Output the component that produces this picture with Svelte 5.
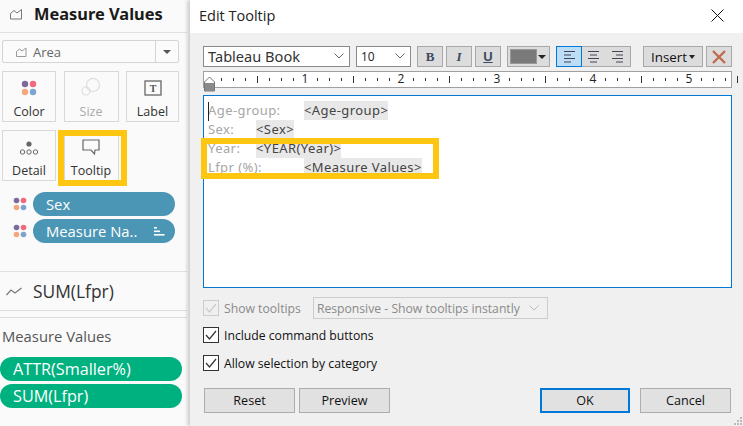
<script>
  const rulerMarks = Array.from({ length: 44 }, (_, i) => i + 1);
  const rows = [
    { label: 'Age-group:', field: '<Age-group>', tab: 96 },
    { label: 'Sex:', field: '<Sex>', tab: 48 },
    { label: 'Year:', field: '<YEAR(Year)>', tab: 48 },
    { label: 'Lfpr (%):', field: '<Measure Values>', tab: 96 }
  ];
</script>

<div class="app">
  <aside class="side">
    <div class="side-title">
      <svg width="14" height="12" viewBox="0 0 14 12" fill="none" stroke="#777"><path d="M1.5 11V5.5L5 2.5L8 5L12.5 1.5V11Z" /></svg>
      <span>Measure Values</span>
    </div>

    <div class="mark-select">
      <div class="mark-name">
        <svg width="11" height="10" viewBox="0 0 11 10" fill="none" stroke="#999"><path d="M.5 9.5V4.5L3.5 2L6 4L10 1V9.5Z" /></svg>
        <span>Area</span>
      </div>
      <div class="mark-arrow"><i></i></div>
    </div>

    <div class="cards">
      <div class="card">
        <svg width="16" height="16" viewBox="0 0 16 16"><circle cx="4" cy="4" r="3.2" fill="#7b6a9b" /><circle cx="12" cy="4" r="3.2" fill="#ee6a7c" /><circle cx="4" cy="12" r="3.2" fill="#f3a77c" /><circle cx="12" cy="12" r="3.2" fill="#7fa3cf" /></svg>
        <span>Color</span>
      </div>
      <div class="card off">
        <svg width="20" height="18" viewBox="0 0 20 18" fill="none" stroke="#ddd" stroke-width="1.2"><circle cx="12" cy="7" r="6.5" /><circle cx="5" cy="13" r="4" /></svg>
        <span>Size</span>
      </div>
      <div class="card">
        <svg width="18" height="16" viewBox="0 0 18 16"><rect x="1" y="1" width="16" height="14" fill="none" stroke="#666" stroke-width="1.3" /><text x="9" y="12" text-anchor="middle" font-size="10" font-weight="700" font-family="Liberation Serif, serif" fill="#555">T</text></svg>
        <span>Label</span>
      </div>
      <div class="card">
        <svg width="20" height="14" viewBox="0 0 20 14" fill="none" stroke="#666"><circle cx="10" cy="3" r="2.6" fill="#666" stroke="none" /><circle cx="3.5" cy="11" r="2.2" /><circle cx="10" cy="11" r="2.2" /><circle cx="16.5" cy="11" r="2.2" /></svg>
        <span>Detail</span>
      </div>
      <div class="card tip">
        <svg width="18" height="16" viewBox="0 0 18 16" fill="none" stroke="#666" stroke-width="1.2"><path d="M1 1H17V11H13L12.5 15L9 11H1Z" /></svg>
        <span>Tooltip</span>
      </div>
    </div>

    <div class="pills">
      <div class="pill-row">
        <svg class="dots" width="14" height="14" viewBox="0 0 14 14"><circle cx="3.5" cy="3.5" r="2.8" fill="#7b6a9b" /><circle cx="10.5" cy="3.5" r="2.8" fill="#ee6a7c" /><circle cx="3.5" cy="10.5" r="2.8" fill="#f3a77c" /><circle cx="10.5" cy="10.5" r="2.8" fill="#7fa3cf" /></svg>
        <div class="pill blue">Sex</div>
      </div>
      <div class="pill-row">
        <svg class="dots" width="14" height="14" viewBox="0 0 14 14"><circle cx="3.5" cy="3.5" r="2.8" fill="#7b6a9b" /><circle cx="10.5" cy="3.5" r="2.8" fill="#ee6a7c" /><circle cx="3.5" cy="10.5" r="2.8" fill="#f3a77c" /><circle cx="10.5" cy="10.5" r="2.8" fill="#7fa3cf" /></svg>
        <div class="pill blue">
          <span>Measure Na..</span>
          <svg width="11" height="9" viewBox="0 0 11 9" fill="#fff"><rect width="3" height="1.6" /><rect y="3.5" width="6" height="1.6" /><rect y="7" width="10.5" height="1.6" /></svg>
        </div>
      </div>
    </div>

    <div class="sum-row">
      <svg width="16" height="9" viewBox="0 0 16 9" fill="none" stroke="#777" stroke-width="1.2"><path d="M.5 8L5 3L9 6L15.5 1" /></svg>
      <span>SUM(Lfpr)</span>
    </div>

    <div class="values">
      <div class="values-title">Measure Values</div>
      <div class="pill green">ATTR(Smaller%)</div>
      <div class="pill green">SUM(Lfpr)</div>
    </div>
  </aside>

  <section class="dialog">
    <header class="titlebar">
      <span>Edit Tooltip</span>
      <svg width="13" height="13" viewBox="0 0 13 13" stroke="#111" stroke-width="1"><path d="M.5.5L12.5 12.5M12.5.5L.5 12.5" /></svg>
    </header>

    <div class="body">
      <div class="toolbar">
        <div class="select font">
          <span>Tableau Book</span>
          <svg width="10" height="6" viewBox="0 0 10 6" fill="none" stroke="#666"><path d="M.5.5L5 5L9.5.5" /></svg>
        </div>
        <div class="select size">
          <span>10</span>
          <svg width="10" height="6" viewBox="0 0 10 6" fill="none" stroke="#666"><path d="M.5.5L5 5L9.5.5" /></svg>
        </div>
        <div class="tb-group">
          <button class="tb b">B</button>
          <button class="tb i">I</button>
          <button class="tb u">U</button>
        </div>
        <div class="swatch"><i></i><b></b></div>
        <div class="align">
          <div class="al on"><svg width="11" height="12" viewBox="0 0 11 12" stroke="#445"><path d="M0 .5H11M0 4H7M0 7.5H11M0 11H7" /></svg></div>
          <div class="al"><svg width="11" height="12" viewBox="0 0 11 12" stroke="#445"><path d="M0 .5H11M2 4H9M0 7.5H11M2 11H9" /></svg></div>
          <div class="al"><svg width="11" height="12" viewBox="0 0 11 12" stroke="#445"><path d="M0 .5H11M4 4H11M0 7.5H11M4 11H11" /></svg></div>
        </div>
        <div class="insert">Insert<i></i></div>
        <div class="clear">
          <svg width="14" height="14" viewBox="0 0 14 14" stroke="#bf6b50" stroke-width="2.4"><path d="M1 1L13 13M13 1L1 13" /></svg>
        </div>
      </div>

      <div class="ruler">
        <svg width="527" height="15" viewBox="0 0 527 15">
          {#each rulerMarks as m}
            {#if m % 8 === 4}
              <rect x={m * 12 + 5} y="3" width="1" height="7" fill="#333" />
            {:else if m % 8 !== 0}
              <rect x={m * 12 + 5} y="5" width="1" height="3" fill="#333" />
            {/if}
          {/each}
          <path d="M.5 18V9L5.5 4L10.5 9V18Z" fill="#fff" stroke="#777" />
          <path d="M1 18V10H10V18Z" fill="#8a8a8a" />
        </svg>
        {#each [1, 2, 3, 4, 5] as n}
          <span class="num" style="left: {n * 96 + 5}px">{n}</span>
        {/each}
      </div>

      <div class="editor">
        <span class="caret"></span>
        {#each rows as r}
          <div class="line">
            <span class="lbl" style="width: {r.tab}px">{r.label}</span><span class="fld">{r.field}</span>
          </div>
        {/each}
      </div>

      <div class="opts">
        <div class="opt first">
          <span class="check dis"><svg width="14" height="14" viewBox="0 0 14 14" fill="none" stroke="#ccc" stroke-width="1.2"><path d="M2 7L5.5 11L12 3" /></svg></span>
          <span class="muted">Show tooltips</span>
          <div class="resp">
            <span>Responsive - Show tooltips instantly</span>
            <svg width="10" height="6" viewBox="0 0 10 6" fill="none" stroke="#bbb"><path d="M.5.5L5 5L9.5.5" /></svg>
          </div>
        </div>
        <div class="opt">
          <span class="check"><svg width="14" height="14" viewBox="0 0 14 14" fill="none" stroke="#333" stroke-width="1.2"><path d="M2 7L5.5 11L12 3" /></svg></span>
          <span>Include command buttons</span>
        </div>
        <div class="opt">
          <span class="check"><svg width="14" height="14" viewBox="0 0 14 14" fill="none" stroke="#333" stroke-width="1.2"><path d="M2 7L5.5 11L12 3" /></svg></span>
          <span>Allow selection by category</span>
        </div>
      </div>

      <div class="actions">
        <button class="btn">Reset</button>
        <button class="btn">Preview</button>
        <button class="btn ok">OK</button>
        <button class="btn">Cancel</button>
      </div>
    </div>

    <svg class="grip" width="10" height="10" viewBox="0 0 10 10" fill="#bbb">
      <rect x="7" y="1" width="2" height="2" /><rect x="4" y="4" width="2" height="2" /><rect x="7" y="4" width="2" height="2" /><rect x="1" y="7" width="2" height="2" /><rect x="4" y="7" width="2" height="2" /><rect x="7" y="7" width="2" height="2" />
    </svg>
  </section>

  <!-- yellow callouts drawn over the text rows -->
  <div class="callout rows-box"></div>
  <div class="callout tip-box"></div>
</div>

<style>
  :global(body) {
    margin: 0;
    background: #fff;
  }

  .app {
    position: relative;
    width: 743px;
    height: 426px;
    display: flex;
    overflow: hidden;
    font-family: "Open Sans", "Noto Sans", sans-serif;
    font-size: 12px;
    color: #222;
  }

  /* left shelf panel */
  .side {
    width: 187px;
    height: 426px;
    flex: none;
    background: #fafafa;
    box-sizing: border-box;
  }

  .side-title {
    height: 33px;
    box-sizing: border-box;
    display: flex;
    align-items: center;
    gap: 11px;
    padding: 0 0 5px 9px;
    border-bottom: 1px solid #e0e0e0;
    font-size: 16.4px;
    font-weight: 700;
    color: #1a1a1a;
    font-family: "Noto Sans", sans-serif;
  }

  .mark-select {
    margin: 7px 8px 0 2px;
    height: 23px;
    display: flex;
    border: 1px solid #d4d4d4;
    border-radius: 2px;
    box-sizing: border-box;
    background: #fbfbfb;
  }

  .mark-name {
    flex: 1;
    display: flex;
    align-items: center;
    gap: 6px;
    padding-left: 13px;
    font-size: 13px;
    color: #666;
  }

  .mark-arrow {
    width: 22px;
    border-left: 1px solid #d4d4d4;
    display: flex;
    align-items: center;
    justify-content: center;
  }

  .mark-arrow i {
    border: 4px solid transparent;
    border-top: 4px solid #555;
    border-bottom: 0;
  }

  .cards {
    margin: 8px 8px 0 2px;
    display: grid;
    grid-template-columns: 54px 55px 53px;
    grid-auto-rows: 51px;
    column-gap: 7.5px;
    row-gap: 8px;
  }

  .card {
    border: 1px solid #d8d8d8;
    box-sizing: border-box;
    display: flex;
    flex-direction: column;
    align-items: center;
    justify-content: flex-end;
    gap: 7px;
    padding-bottom: 1px;
    font-size: 12.5px;
    color: #333;
  }

  .card.off {
    color: #aaa;
  }

  .pills {
    margin-top: 11px;
    display: flex;
    flex-direction: column;
    gap: 3px;
  }

  .pill-row {
    display: flex;
    align-items: center;
    margin-left: 13px;
    gap: 6px;
  }

  .pill {
    height: 24px;
    border-radius: 12px;
    color: #fff;
    display: flex;
    align-items: center;
    font-size: 14.8px;
    box-sizing: border-box;
  }

  .pill.blue {
    width: 142px;
    background: #4b96b4;
    padding: 0 10px 0 13px;
    justify-content: space-between;
  }

  .sum-row {
    margin-top: 28px;
    height: 40px;
    box-sizing: border-box;
    display: flex;
    align-items: center;
    gap: 11px;
    padding-left: 6px;
    border-top: 1px solid #e0e0e0;
    border-bottom: 1px solid #dcdcdc;
    font-size: 17.4px;
    color: #333;
  }

  .values {
    margin-top: 6px;
    border-top: 1px solid #dcdcdc;
    padding-top: 10px;
  }

  .values-title {
    padding-left: 2px;
    font-size: 14.8px;
    color: #555;
    margin-bottom: 12px;
    line-height: 17px;
  }

  .pill.green {
    width: 182px;
    background: #00b180;
    padding-left: 13px;
    margin-bottom: 3px;
    font-size: 16.2px;
  }

  /* dialog */
  .dialog {
    position: relative;
    flex: 1;
    margin-left: 3px;
    background: #f0f0f0;
    box-shadow: -3px 0 3px rgba(0, 0, 0, 0.18);
  }

  .titlebar {
    height: 33px;
    box-sizing: border-box;
    background: #fff;
    display: flex;
    align-items: center;
    justify-content: space-between;
    padding: 0 19px 3px 9px;
    font-size: 14.5px;
    color: #222;
  }

  .body {
    padding: 13px 10px 0 13px;
  }

  .toolbar {
    display: flex;
    height: 21px;
  }

  .select {
    background: #fff;
    border: 1px solid #8a8a8a;
    box-sizing: border-box;
    display: flex;
    align-items: center;
    justify-content: space-between;
    padding: 0 5px 1px 4px;
    height: 21px;
  }

  .select.font {
    width: 147px;
    font-family: "Noto Sans", sans-serif;
    font-size: 14.6px;
    color: #333;
    margin-right: 6px;
  }

  .select.size {
    width: 55px;
    margin-right: 6px;
  }

  .tb-group {
    display: flex;
    gap: 3px;
    margin-right: 6px;
  }

  .tb {
    width: 26px;
    height: 21px;
    padding: 0;
    background: #dcdcdc;
    border: 1px solid #a8a8a8;
    font-family: "Liberation Serif", serif;
    font-size: 13px;
    font-weight: 700;
    color: #3c4a60;
  }

  .tb.i {
    font-style: italic;
  }

  .tb.u {
    text-decoration: underline;
    font-family: "Liberation Sans", sans-serif;
  }

  .swatch {
    width: 43px;
    height: 21px;
    box-sizing: border-box;
    background: #dcdcdc;
    border: 1px solid #a8a8a8;
    display: flex;
    align-items: center;
    padding: 0 3px 0 2px;
    justify-content: space-between;
    margin-right: 6px;
  }

  .swatch i {
    width: 27px;
    height: 15px;
    background: #7a7a7a;
    border: 1px solid #999;
    box-sizing: border-box;
  }

  .swatch b {
    border: 4px solid transparent;
    border-top: 4px solid #222;
    border-bottom: 0;
  }

  .align {
    width: 75px;
    height: 21px;
    box-sizing: border-box;
    display: flex;
    background: #dcdcdc;
    border: 1px solid #a8a8a8;
    margin-right: 12px;
  }

  .al {
    flex: 1;
    display: flex;
    align-items: center;
    justify-content: center;
    box-sizing: border-box;
  }

  .al.on {
    background: #bddcf5;
    outline: 1px solid #0078d7;
  }

  .insert {
    width: 60px;
    height: 21px;
    box-sizing: border-box;
    background: #dcdcdc;
    border: 1px solid #a8a8a8;
    display: flex;
    align-items: center;
    justify-content: center;
    gap: 2px;
    margin-right: 3px;
    font-size: 13.4px;
    color: #111;
  }

  .insert i {
    border: 3.5px solid transparent;
    border-top: 4px solid #222;
    border-bottom: 0;
  }

  .clear {
    width: 26px;
    height: 21px;
    box-sizing: border-box;
    background: #dcdcdc;
    border: 1px solid #a8a8a8;
    display: flex;
    align-items: center;
    justify-content: center;
  }

  .ruler {
    position: relative;
    margin-top: 4px;
    width: 529px;
    height: 17px;
    box-sizing: border-box;
    background: #fff;
    border: 1px solid #a0a0a0;
  }

  .ruler svg {
    display: block;
    margin-top: 1px;
    overflow: visible;
  }

  .num {
    position: absolute;
    top: -1px;
    font-size: 12px;
    line-height: 16px;
    color: #222;
    transform: translateX(-50%);
  }

  .editor {
    position: relative;
    margin-top: 7px;
    width: 529px;
    height: 193px;
    box-sizing: border-box;
    background: #fff;
    border: 1px solid #0078d7;
    padding: 5px 0 0 4px;
    font-family: "Noto Sans", sans-serif;
    font-size: 13px;
    letter-spacing: 0.42px;
  }

  .caret {
    position: absolute;
    left: 4px;
    top: 6px;
    width: 1px;
    height: 19px;
    background: #222;
  }

  .line {
    height: 19px;
    line-height: 19px;
    white-space: nowrap;
    display: flex;
  }

  .lbl {
    flex: none;
    color: #a6a6a6;
  }

  .fld {
    background: #e8e8e8;
    color: #444;
  }

  .opts {
    margin-top: 12px;
  }

  .opt {
    display: flex;
    align-items: center;
    height: 16px;
    gap: 5px;
    margin-bottom: 12px;
    font-size: 12.2px;
    color: #111;
  }

  .opt.first {
    margin-bottom: 11px;
  }

  .check {
    width: 16px;
    height: 16px;
    box-sizing: border-box;
    border: 1px solid #333;
    background: #fff;
    display: flex;
    align-items: center;
    justify-content: center;
  }

  .check.dis {
    border-color: #ccc;
    background: #f0f0f0;
  }

  .muted {
    color: #8a8a8a;
    margin-right: 7px;
  }

  .resp {
    width: 235px;
    height: 22px;
    box-sizing: border-box;
    border: 1px solid #ccc;
    display: flex;
    align-items: center;
    justify-content: space-between;
    padding: 0 8px 0 3px;
    color: #8a8a8a;
  }

  .actions {
    display: flex;
    margin-top: 17px;
    padding-left: 1px;
    gap: 4px;
  }

  .btn {
    width: 91px;
    height: 25px;
    padding: 0;
    box-sizing: border-box;
    background: #e1e1e1;
    border: 1px solid #adadad;
    font-family: inherit;
    font-size: 12.6px;
    color: #111;
  }

  .btn.ok {
    width: 90px;
    margin-left: 146px;
    margin-right: 6px;
    border: 2px solid #0078d7;
  }

  .grip {
    position: absolute;
    right: 0;
    bottom: 0;
  }

  .callout {
    position: absolute;
    border: 6px solid #fdc711;
    box-sizing: border-box;
    pointer-events: none;
  }

  .rows-box {
    left: 201px;
    top: 138px;
    width: 238px;
    height: 41px;
  }

  .tip-box {
    left: 58px;
    top: 130px;
    width: 69px;
    height: 56px;
  }
</style>
